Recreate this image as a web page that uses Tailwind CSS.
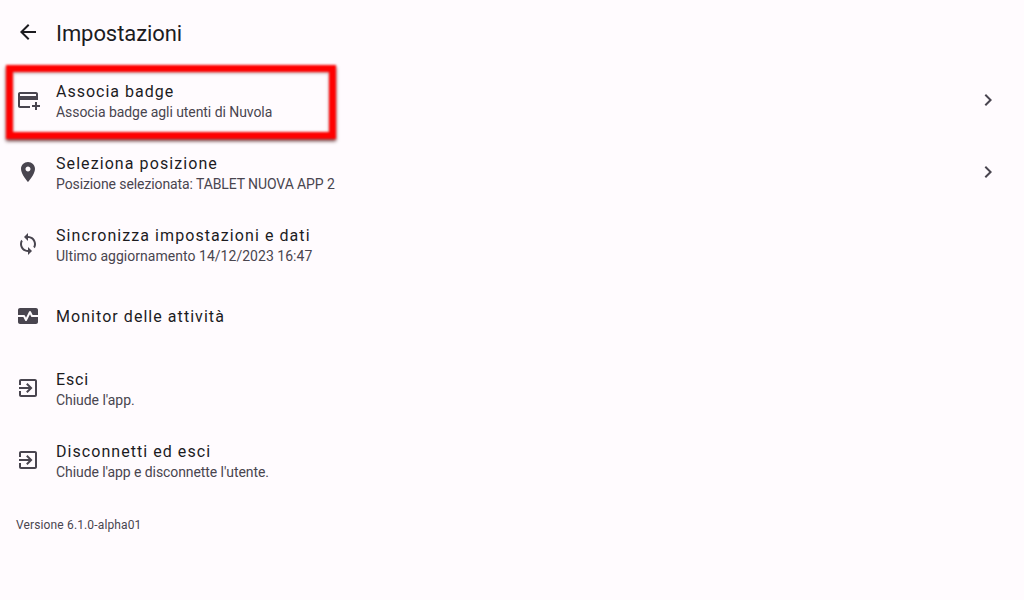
<!DOCTYPE html>
<html lang="it">
<head>
    <meta charset="UTF-8">
    <title>Impostazioni</title>
    <script src="https://cdn.jsdelivr.net/npm/@tailwindcss/browser@4"></script>
</head>
<body class="bg-[#fffbfe] font-['Roboto',sans-serif] text-[#1c1b1f]">
    <div class="relative h-[600px] w-[1024px] overflow-hidden">
        <!-- Header -->
        <header class="flex h-[64px] items-center pl-4">
            <svg class="h-6 w-6 fill-[#1c1b1f]" viewBox="0 0 24 24"><path d="M20 11H7.83l5.59-5.59L12 4l-8 8 8 8 1.41-1.41L7.83 13H20v-2z"/></svg>
            <h1 class="ml-4 pt-1 text-[22px] leading-7 tracking-[-0.08px]">Impostazioni</h1>
        </header>

        <!-- Settings list -->
        <div class="flex flex-col">
            <div class="flex h-[72px] items-center px-4">
                <svg class="h-6 w-6 shrink-0 fill-[#49454f]" viewBox="0 0 24 24"><path d="M20 4H4c-1.11 0-1.99.89-1.99 2L2 18c0 1.11.89 2 2 2h10v-2H4v-6h18V6c0-1.11-.89-2-2-2zm0 4H4V6h16v2zm4 9v2h-3v3h-2v-3h-3v-2h3v-3h2v3h3z"/></svg>
                <div class="ml-4 flex-1 pt-1">
                    <p class="text-base leading-5 tracking-[1px]">Associa badge</p>
                    <p class="text-sm leading-5 tracking-[-0.06px] text-[#49454f]">Associa badge agli utenti di Nuvola</p>
                </div>
                <svg class="mr-2 h-6 w-6 fill-[#49454f]" viewBox="0 0 24 24"><path d="M10 6L8.59 7.41 13.17 12l-4.58 4.59L10 18l6-6z"/></svg>
            </div>
            <div class="flex h-[72px] items-center px-4">
                <svg class="h-6 w-6 shrink-0 fill-[#49454f]" viewBox="0 0 24 24"><path d="M12 2C8.13 2 5 5.13 5 9c0 5.25 7 13 7 13s7-7.75 7-13c0-3.87-3.13-7-7-7zm0 9.5c-1.38 0-2.5-1.12-2.5-2.5s1.12-2.5 2.5-2.5 2.5 1.12 2.5 2.5-1.12 2.5-2.5 2.5z"/></svg>
                <div class="ml-4 flex-1 pt-1">
                    <p class="text-base leading-5 tracking-[1.08px]">Seleziona posizione</p>
                    <p class="text-sm leading-5 tracking-[-0.1px] text-[#49454f]">Posizione selezionata: TABLET NUOVA APP 2</p>
                </div>
                <svg class="mr-2 h-6 w-6 fill-[#49454f]" viewBox="0 0 24 24"><path d="M10 6L8.59 7.41 13.17 12l-4.58 4.59L10 18l6-6z"/></svg>
            </div>
            <div class="flex h-[72px] items-center px-4">
                <svg class="h-6 w-6 shrink-0 fill-[#49454f]" viewBox="0 0 24 24"><path d="M12 4V1L8 5l4 4V6c3.31 0 6 2.69 6 6 0 1.01-.25 1.97-.7 2.8l1.46 1.46C19.54 15.03 20 13.57 20 12c0-4.42-3.58-8-8-8zm0 14c-3.31 0-6-2.69-6-6 0-1.01.25-1.97.7-2.8L5.24 7.74C4.46 8.97 4 10.43 4 12c0 4.42 3.58 8 8 8v3l4-4-4-4v3z"/></svg>
                <div class="ml-4 flex-1 pt-1">
                    <p class="text-base leading-5 tracking-[1.07px]">Sincronizza impostazioni e dati</p>
                    <p class="text-sm leading-5 tracking-[0.03px] text-[#49454f]">Ultimo aggiornamento 14/12/2023 16:47</p>
                </div>
            </div>
            <div class="flex h-[72px] items-center px-4">
                <svg class="h-6 w-6 shrink-0 fill-[#49454f]" viewBox="0 0 24 24"><path d="M15.11 12.45L14 10.24l-3.11 6.21c-.16.34-.51.55-.89.55s-.73-.21-.89-.55L7.38 13H2v5c0 1.1.9 2 2 2h16c1.1 0 2-.9 2-2v-5h-6c-.38 0-.73-.21-.89-.55z"/><path d="M20 4H4c-1.1 0-2 .9-2 2v5h6c.38 0 .73.21.89.55L10 13.76l3.11-6.21c.34-.68 1.45-.68 1.79 0L16.62 11H22V6c0-1.1-.9-2-2-2z"/></svg>
                <div class="ml-4 flex-1 pt-0.5">
                    <p class="text-base leading-6 tracking-[1.05px]">Monitor delle attività</p>
                </div>
            </div>
            <div class="flex h-[72px] items-center px-4">
                <svg class="h-6 w-6 shrink-0 fill-[#49454f]" viewBox="0 0 24 24"><path d="M10.09 15.59L11.5 17l5-5-5-5-1.41 1.41L12.67 11H3v2h9.67l-2.58 2.59zM19 3H5c-1.11 0-2 .9-2 2v4h2V5h14v14H5v-4H3v4c0 1.1.89 2 2 2h14c1.1 0 2-.9 2-2V5c0-1.1-.9-2-2-2z"/></svg>
                <div class="ml-4 flex-1 pt-1">
                    <p class="text-base leading-5 tracking-[0.8px]">Esci</p>
                    <p class="text-sm leading-5 tracking-[-0.05px] text-[#49454f]">Chiude l'app.</p>
                </div>
            </div>
            <div class="flex h-[72px] items-center px-4">
                <svg class="h-6 w-6 shrink-0 fill-[#49454f]" viewBox="0 0 24 24"><path d="M10.09 15.59L11.5 17l5-5-5-5-1.41 1.41L12.67 11H3v2h9.67l-2.58 2.59zM19 3H5c-1.11 0-2 .9-2 2v4h2V5h14v14H5v-4H3v4c0 1.1.89 2 2 2h14c1.1 0 2-.9 2-2V5c0-1.1-.9-2-2-2z"/></svg>
                <div class="ml-4 flex-1 pt-1">
                    <p class="text-base leading-5 tracking-[1.05px]">Disconnetti ed esci</p>
                    <p class="text-sm leading-5 tracking-[-0.08px] text-[#49454f]">Chiude l'app e disconnette l'utente.</p>
                </div>
            </div>
        </div>

        <p class="mt-[21px] pl-4 text-xs leading-4 tracking-[0.14px] text-[#49454f]">Versione 6.1.0-alpha01</p>

        <!-- Red annotation box -->
        <div class="absolute left-[6px] top-[65px] h-[74px] w-[330px] border-[7px] border-[#ff0000] blur-[1px] shadow-[0_2px_3px_rgba(60,0,0,0.8),inset_0_1px_3px_rgba(60,0,0,0.4)]"></div>
    </div>
</body>
</html>
